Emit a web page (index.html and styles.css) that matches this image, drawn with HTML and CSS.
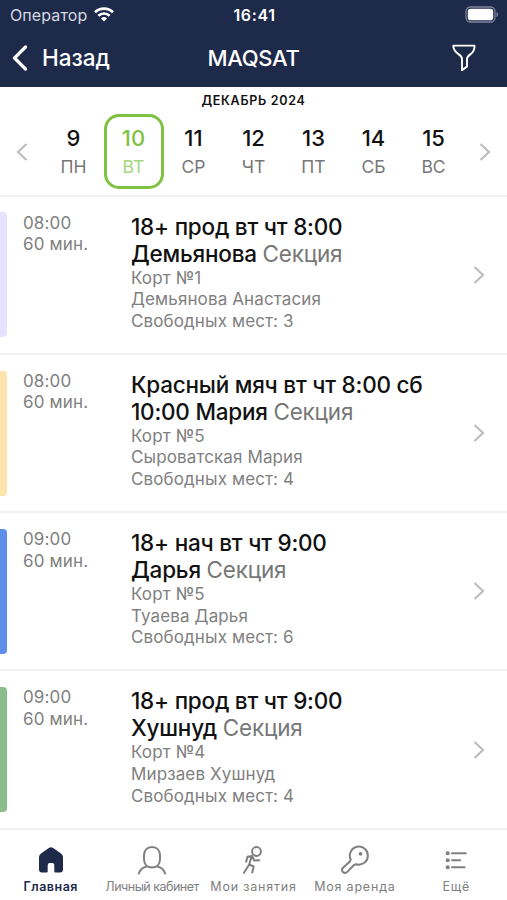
FILE: index.html
```html
<!DOCTYPE html>
<html lang="ru">

<head>
    <meta charset="UTF-8">
    <meta name="viewport" content="width=device-width, initial-scale=1.0">
    <title>MAQSAT</title>
    <link rel="stylesheet" href="styles.css">
</head>

<body>
    <header class="header">
        <div class="status-bar">
            <div class="carrier">
                <span>Оператор</span>
                <svg class="wifi" width="20" height="15" viewBox="0 0 20 15" fill="none" stroke="#fff" stroke-width="2.7">
                    <path d="M1 5.2a13 13 0 0 1 18 0" />
                    <path d="M4.3 8.8a8.2 8.2 0 0 1 11.4 0" />
                    <path d="M10 14.6l-3-3.2a4.4 4.4 0 0 1 6 0z" fill="#fff" stroke="none" />
                </svg>
            </div>
            <span class="clock">16:41</span>
            <svg class="battery" width="34" height="17" viewBox="0 0 34 17">
                <rect x="1" y="1" width="29" height="15" rx="4.5" fill="none" stroke="#7d859b" stroke-width="1.3" />
                <rect x="2.8" y="2.8" width="25.4" height="11.4" rx="2.8" fill="#fff" />
                <path d="M31.5 5.8c2 1 2 4.4 0 5.4z" fill="#7d859b" />
            </svg>
        </div>
        <div class="nav-bar">
            <a class="back" href="#">
                <svg width="16" height="26" viewBox="0 0 16 26" fill="none" stroke="#fff" stroke-width="3.2" stroke-linecap="round" stroke-linejoin="round">
                    <path d="M13.5 2L2.5 13l11 11" />
                </svg>
                <span>Назад</span>
            </a>
            <h1 class="title">MAQSAT</h1>
            <a class="filter" href="#">
                <svg width="24" height="28" viewBox="0 0 24 28" fill="none" stroke="#fff" stroke-width="1.9" stroke-linejoin="round">
                    <path d="M1.3 1.6h21.2c.2 4-1.2 6.7-4.2 8.8-2 1.4-3.3 2.6-3.3 4.6v7.600l-5 3.500v-11.100c0-2-1.200-3.200-3.200-4.600-3.300-2.100-5.500-4.800-5.500-8.800z" />
                </svg>
            </a>
        </div>
    </header>

    <section class="calendar">
        <div class="month">ДЕКАБРЬ 2024</div>
        <div class="week">
            <svg class="arrow" width="12" height="20" viewBox="0 0 12 20"><path d="M10.500 2L2 10l8.500 8" /></svg>
            <div class="days">
                <div class="day"><b>9</b><span>ПН</span></div>
                <div class="day active"><b>10</b><span>ВТ</span></div>
                <div class="day"><b>11</b><span>СР</span></div>
                <div class="day"><b>12</b><span>ЧТ</span></div>
                <div class="day"><b>13</b><span>ПТ</span></div>
                <div class="day"><b>14</b><span>СБ</span></div>
                <div class="day"><b>15</b><span>ВС</span></div>
            </div>
            <svg class="arrow" width="12" height="20" viewBox="0 0 12 20"><path d="M1.500 2L10 10l-8.500 8" /></svg>
        </div>
    </section>

    <main class="schedule">
        <article class="lesson">
            <div class="mark lilac"></div>
            <div class="time">08:00<br>60 мин.</div>
            <div class="info">
                <h2>18+ прод вт чт 8:00<br>Демьянова <span>Секция</span></h2>
                <p>Корт №1</p>
                <p>Демьянова Анастасия</p>
                <p>Свободных мест: 3</p>
            </div>
            <svg class="arrow" width="12" height="20" viewBox="0 0 12 20"><path d="M1.500 2L10 10l-8.500 8" /></svg>
        </article>
        <article class="lesson">
            <div class="mark yellow"></div>
            <div class="time">08:00<br>60 мин.</div>
            <div class="info">
                <h2>Красный мяч вт чт 8:00 сб<br>10:00 Мария <span>Секция</span></h2>
                <p>Корт №5</p>
                <p>Сыроватская Мария</p>
                <p>Свободных мест: 4</p>
            </div>
            <svg class="arrow" width="12" height="20" viewBox="0 0 12 20"><path d="M1.500 2L10 10l-8.500 8" /></svg>
        </article>
        <article class="lesson">
            <div class="mark blue"></div>
            <div class="time">09:00<br>60 мин.</div>
            <div class="info">
                <h2>18+ нач вт чт 9:00<br>Дарья <span>Секция</span></h2>
                <p>Корт №5</p>
                <p>Туаева Дарья</p>
                <p>Свободных мест: 6</p>
            </div>
            <svg class="arrow" width="12" height="20" viewBox="0 0 12 20"><path d="M1.500 2L10 10l-8.500 8" /></svg>
        </article>
        <article class="lesson">
            <div class="mark green"></div>
            <div class="time">09:00<br>60 мин.</div>
            <div class="info">
                <h2>18+ прод вт чт 9:00<br>Хушнуд <span>Секция</span></h2>
                <p>Корт №4</p>
                <p>Мирзаев Хушнуд</p>
                <p>Свободных мест: 4</p>
            </div>
            <svg class="arrow" width="12" height="20" viewBox="0 0 12 20"><path d="M1.500 2L10 10l-8.500 8" /></svg>
        </article>
    </main>

    <nav class="tabs">
        <a class="tab current" href="#">
            <svg width="30" height="30" viewBox="0 0 30 30">
                <path d="M13.200 2.800q1.800-1.300 3.600 0l8.200 5.600q2 1.400 2 3.800v12.300q0 3-3 3h-4.700q-1 0-1-1v-6.500q0-2-2-2h-2.600q-2 0-2 2v6.500q0 1-1 1h-4.700q-3 0-3-3v-12.300q0-2.400 2-3.800z" />
            </svg>
            <span>Главная</span>
        </a>
        <a class="tab" href="#">
            <svg width="30" height="30" viewBox="0 0 30 30">
                <path d="M15 2c5 0 8 3.400 8 8.500v3.500c0 5-3 8.500-8 8.500s-8-3.500-8-8.500v-3.500c0-5.100 3-8.500 8-8.500z" />
                <path d="M1.800 28.500c1.300-4 4-6.300 8.200-7M28.200 28.500c-1.300-4-4-6.300-8.200-7" />
            </svg>
            <span class="tight">Личный кабинет</span>
        </a>
        <a class="tab" href="#">
            <svg width="30" height="30" viewBox="0 0 30 30">
                <circle cx="18.500" cy="6.500" r="4.400" />
                <path d="M8.200 16.800l1.200-5 4.800-.8 2 4.600 5-.4M13.500 12l-2.300 7.500-5.200 8.300M11.200 19.500l4.500 2-1.500 6" />
            </svg>
            <span>Мои занятия</span>
        </a>
        <a class="tab" href="#">
            <svg width="30" height="30" viewBox="0 0 30 30">
                <path d="M10.700 14.500a9 9 0 1 1 5.400 4.700l-2.400 1-5.900 6.200q-2.700 2.700-5 .6-1.800-2.300.5-4.500l6.600-6z" />
                <circle class="dot" cx="20.500" cy="8.800" r="1.900" />
            </svg>
            <span>Моя аренда</span>
        </a>
        <a class="tab" href="#">
            <svg width="30" height="30" viewBox="0 0 30 30">
                <path d="M11 8.200h13.800M11 15.200h8.200M11 22.200h12.500" />
                <g class="dot">
                    <circle cx="6.700" cy="8.200" r="2" />
                    <circle cx="6.700" cy="15.200" r="2" />
                    <circle cx="6.700" cy="22.200" r="2" />
                </g>
            </svg>
            <span>Ещё</span>
        </a>
    </nav>
</body>

</html>
```

FILE: styles.css
```css
* {
    box-sizing: border-box;
}

body {
    margin: 0;
    height: 900px;
    overflow: hidden;
    display: flex;
    flex-direction: column;
    font-family: Inter, "Liberation Sans", sans-serif;
    background: #fff;
    color: #111;
}

a {
    color: inherit;
    text-decoration: none;
}

h1,
h2,
p {
    margin: 0;
}

.header {
    height: 87px;
    background: #1e2a4a;
    color: #fff;
}

.status-bar,
.nav-bar {
    display: grid;
    grid-template-columns: 1fr auto 1fr;
    align-items: center;
}

.status-bar {
    height: 29px;
    padding: 0 8px 0 10px;
}

.carrier {
    display: flex;
    align-items: center;
    gap: 7px;
    font-size: 16px;
    letter-spacing: 0.1px;
    color: #d5d8e0;
}

.clock {
    font-size: 16px;
    font-weight: 600;
    letter-spacing: 0.6px;
}

.battery {
    justify-self: end;
}

.nav-bar {
    height: 57px;
    padding: 0 12px;
}

.back {
    display: flex;
    align-items: center;
    gap: 14px;
    font-size: 22.5px;
    font-weight: 500;
}

.title {
    font-size: 22px;
    font-weight: 500;
    letter-spacing: -0.3px;
}

.filter {
    justify-self: end;
    height: 28px;
    margin-right: 19px;
}

.calendar {
    height: 109.5px;
    border-bottom: 2px solid #f1f1f1;
}

.month {
    padding-top: 6px;
    font-size: 12.5px;
    line-height: 16px;
    font-weight: 600;
    letter-spacing: 0.7px;
    text-align: center;
}

.week {
    display: flex;
    align-items: center;
    justify-content: space-between;
    margin-top: 5px;
    padding: 0 16px;
}

.days {
    display: flex;
}

.day {
    width: 60px;
    height: 75px;
    padding-top: 9px;
    display: flex;
    flex-direction: column;
    align-items: center;
    border: 3px solid transparent;
    border-radius: 15px;
}

.day b {
    font-size: 22px;
    line-height: 24px;
    font-weight: 500;
}

.day span {
    margin-top: 5px;
    font-size: 17.5px;
    line-height: 24px;
    color: #777;
}

.day.active {
    border-color: #7fc241;
}

.day.active b {
    color: #7fc241;
}

.day.active span {
    color: #a5d67c;
}

.arrow {
    fill: none;
    stroke: #bdbdbd;
    stroke-width: 2.2;
}

.lesson {
    display: flex;
    height: 158.3px;
    border-bottom: 2px solid #f1f1f1;
}

.mark {
    width: 7px;
    height: 125px;
    margin-top: 15.8px;
    border-radius: 0 4px 4px 0;
}

.lilac {
    background: #e6e2fd;
}

.yellow {
    background: #fde3ac;
}

.blue {
    background: #5c8fe8;
}

.green {
    background: #8cbc8a;
}

.time {
    width: 124px;
    padding: 16px 0 0 16px;
    font-size: 17px;
    line-height: 21.6px;
    letter-spacing: 0.15px;
    color: #808080;
}

.info {
    flex: 1;
    padding-top: 16px;
}

.info h2 {
    margin-bottom: 1px;
    font-size: 22.5px;
    line-height: 27px;
    font-weight: 500;
    letter-spacing: -0.22px;
    white-space: nowrap;
}

.info h2 span {
    font-weight: 400;
    color: #777;
}

.info p {
    font-size: 17px;
    line-height: 21.6px;
    letter-spacing: 0.12px;
    color: #808080;
}

.lesson .arrow {
    align-self: center;
    margin-right: 22px;
}

.tabs {
    flex: 1;
    display: grid;
    grid-template-columns: repeat(5, 1fr);
}

.tab {
    display: flex;
    flex-direction: column;
    align-items: center;
    padding-top: 15px;
    font-size: 12.5px;
    line-height: 16px;
    letter-spacing: 0.8px;
    color: #808080;
    white-space: nowrap;
}

.tab svg {
    fill: none;
    stroke: #808080;
    stroke-width: 2;
    stroke-linecap: round;
    stroke-linejoin: round;
}

.tab span {
    margin-top: 4px;
}

.tab .dot {
    fill: #808080;
    stroke: none;
}

.tab .tight {
    letter-spacing: -0.5px;
}

.tab.current {
    color: #1e2a4a;
    font-weight: 600;
    letter-spacing: 0.5px;
}

.tab.current svg {
    fill: #1e2a4a;
    stroke: none;
}
```
